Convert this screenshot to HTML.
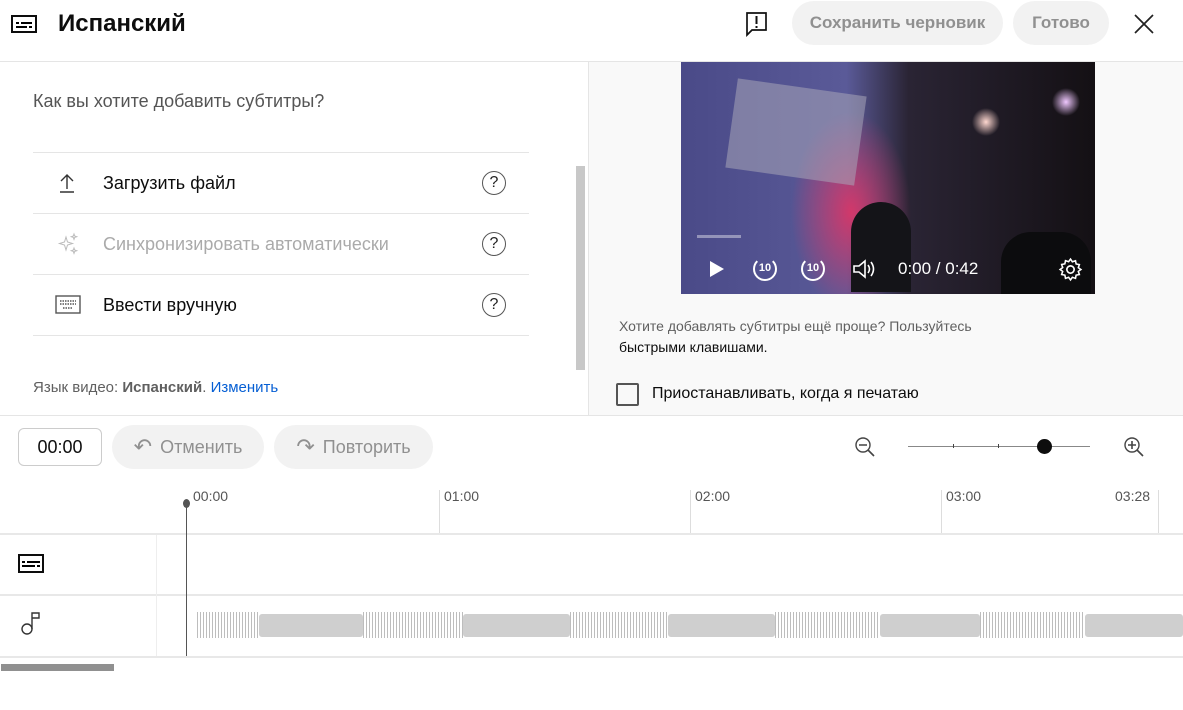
<!DOCTYPE html>
<html><head><meta charset="utf-8"><style>
*{box-sizing:border-box;margin:0;padding:0}
body{width:1183px;height:710px;overflow:hidden;background:#fff;font-family:"Liberation Sans",Roboto,"Noto Sans CJK SC",sans-serif;position:relative;color:#0d0d0d}
.a{position:absolute}
.pill{position:absolute;background:#f2f2f2;border-radius:22px;color:#909090;font-size:17px;display:flex;align-items:center;justify-content:center;font-weight:bold}
.row{position:absolute;left:33px;width:496px;height:61px;border-top:1px solid #e5e5e5;display:flex;align-items:center;font-size:18px}
.row .t{position:absolute;left:70px}
.q{position:absolute;left:449px;width:24px;height:24px;border:1.5px solid #555;border-radius:50%;font-size:16px;text-align:center;line-height:21px;color:#222}
.tick{position:absolute;top:490px;height:43px;border-left:1px solid #ddd}
.tl{position:absolute;top:488px;font-size:14px;color:#555}
.str{position:absolute;top:612px;height:26px;background:repeating-linear-gradient(90deg,#bdbdbd 0 1px,transparent 1px 3px)}
.sol{position:absolute;top:614px;height:23px;background:#cfcfcf;border-radius:3px}
</style></head><body>
<svg class="a" style="left:11px;top:14px" width="26" height="20" viewBox="0 0 26 20"><rect x="1" y="2" width="24" height="16" fill="none" stroke="#0d0d0d" stroke-width="2"/><rect x="5" y="8" width="3" height="2" fill="#000"/><rect x="10" y="8" width="11" height="2" fill="#000"/><rect x="5" y="12" width="11" height="2" fill="#000"/><rect x="18" y="12" width="3" height="2" fill="#000"/></svg>
<div class="a" style="left:58px;top:10px;font-size:24px;font-weight:bold">Испанский</div>
<svg class="a" style="left:745px;top:11px" width="24" height="26" viewBox="0 0 24 26"><path d="M2 2h19v17H7l-5 5z" fill="none" stroke="#111" stroke-width="1.7"/><rect x="10.5" y="5" width="2" height="8" fill="#111"/><rect x="10.5" y="15" width="2" height="2" fill="#111"/></svg>
<div class="pill" style="left:792px;top:1px;width:211px;height:44px">Сохранить черновик</div>
<div class="pill" style="left:1013px;top:1px;width:96px;height:44px">Готово</div>
<svg class="a" style="left:1133px;top:13px" width="22" height="22"><path d="M2 2L20 20M20 2L2 20" stroke="#222" stroke-width="1.7"/></svg>
<div class="a" style="left:0;top:61px;width:1183px;border-top:1px solid #e5e5e5"></div>
<div class="a" style="left:33px;top:91px;font-size:18px;color:#555">Как вы хотите добавить субтитры?</div>
<div class="row" style="top:152px"><svg class="a" style="left:25px" width="18" height="22"><path d="M9 3v14M3 9l6-6 6 6M2 20h14" stroke="#333" stroke-width="1.4" fill="none"/></svg><span class="t">Загрузить файл</span><div class="q">?</div></div>
<div class="row" style="top:213px;color:#aaa"><svg class="a" style="left:24px" width="24" height="24"><path d="M9 5l1.5 5 5 1.5-5 1.5L9 18l-1.5-5-5-1.5 5-1.5z M17 2l.7 2 2 .7-2 .7-.7 2-.7-2-2-.7 2-.7z M17 16l.7 2 2 .7-2 .7-.7 2-.7-2-2-.7 2-.7z" fill="none" stroke="#bbb" stroke-width="1"/></svg><span class="t">Синхронизировать автоматически</span><div class="q">?</div></div>
<div class="row" style="top:274px"><svg class="a" style="left:22px" width="26" height="20"><rect x="1" y="1" width="24" height="17" fill="none" stroke="#555" stroke-width="1.4"/><path d="M5 6h16M5 9h16M8 13h10" stroke="#555" stroke-width="1.4" stroke-dasharray="1.5 1"/></svg><span class="t">Ввести вручную</span><div class="q">?</div></div>
<div class="a" style="left:33px;top:335px;width:496px;border-top:1px solid #e5e5e5"></div>
<div class="a" style="left:33px;top:379px;font-size:15px;color:#606060">Язык видео: <b>Испанский</b>. <span style="color:#065fd4">Изменить</span></div>
<div class="a" style="left:576px;top:166px;width:9px;height:204px;background:#c8c8c8"></div>
<div class="a" style="left:588px;top:62px;width:1px;height:353px;background:#e5e5e5"></div>
<div class="a" style="left:589px;top:62px;width:594px;height:353px;background:#f9f9f9"></div>
<div class="a" style="left:681px;top:62px;width:414px;height:232px;overflow:hidden;background:radial-gradient(ellipse 60px 100px at 170px 150px,#d2386a,transparent),radial-gradient(circle 14px at 305px 60px,#ffd8d0,transparent),radial-gradient(circle 14px at 385px 40px,#f0c8ff,transparent),linear-gradient(90deg,#4a4a88 0,#5a5a98 40%,#2a2434 55%,#141014 100%)">
<div class="a" style="left:50px;top:25px;width:130px;height:90px;background:#a8a6b8;opacity:.55;transform:rotate(8deg)"></div>
<div class="a" style="left:170px;top:140px;width:60px;height:90px;background:#141418;border-radius:30px 30px 0 0"></div>
<div class="a" style="left:320px;top:170px;width:90px;height:70px;background:#0c0c0e;border-radius:30px 30px 0 0"></div>
<div class="a" style="left:16px;top:173px;width:44px;height:3px;background:rgba(255,255,255,.4)"></div>
<svg class="a" style="left:26px;top:197px" width="20" height="20"><path d="M3 2L17 10 3 18z" fill="#fff"/></svg>
<div class="a" style="left:72px;top:195px;width:24px;height:24px;border:2.5px solid #fff;border-radius:50%;color:#fff;font-size:11px;font-weight:bold;text-align:center;line-height:19px;border-top-color:transparent">10</div>
<div class="a" style="left:120px;top:195px;width:24px;height:24px;border:2.5px solid #fff;border-radius:50%;color:#fff;font-size:11px;font-weight:bold;text-align:center;line-height:19px;border-top-color:transparent">10</div>
<svg class="a" style="left:171px;top:196px" width="24" height="22"><path d="M2 8h5l6-5v16l-6-5H2z" fill="none" stroke="#fff" stroke-width="1.6"/><path d="M16 7q3 4 0 8M19 4q5 7 0 14" fill="none" stroke="#fff" stroke-width="1.6"/></svg>
<div class="a" style="left:217px;top:197px;color:#fff;font-size:17px">0:00 / 0:42</div>
<svg class="a" style="left:377px;top:195px" width="25" height="25" viewBox="0 0 24 24"><circle cx="12" cy="12" r="3.5" fill="none" stroke="#fff" stroke-width="1.6"/><path d="M12 2l1.8 2.6 3-1 .6 3.1 3.1.6-1 3L22 12l-2.5 1.8 1 3-3.1.6-.6 3.1-3-1L12 22l-1.8-2.5-3 1-.6-3.1-3.1-.6 1-3L2 12l2.5-1.8-1-3 3.1-.6.6-3.1 3 1z" fill="none" stroke="#fff" stroke-width="1.5"/></svg>
</div>
<div class="a" style="left:619px;top:316px;font-size:14px;color:#606060;line-height:21px">Хотите добавлять субтитры ещё проще? Пользуйтесь<br><span style="color:#0d0d0d">быстрыми клавишами.</span></div>
<div class="a" style="left:616px;top:383px;width:23px;height:23px;border:2px solid #555;border-radius:2px"></div>
<div class="a" style="left:652px;top:385px;font-size:16px">Приостанавливать, когда я печатаю</div>
<div class="a" style="left:0;top:415px;width:1183px;border-top:1px solid #e5e5e5"></div>
<div class="a" style="left:18px;top:428px;width:84px;height:38px;border:1px solid #ccc;border-radius:6px;font-size:18px;text-align:center;line-height:36px">00:00</div>
<div class="pill" style="left:112px;top:425px;width:152px;height:44px;font-weight:normal;font-size:18px;color:#909090"><span style="font-size:22px;margin-right:8px">↶</span>Отменить</div>
<div class="pill" style="left:274px;top:425px;width:159px;height:44px;font-weight:normal;font-size:18px;color:#909090"><span style="font-size:22px;margin-right:8px">↷</span>Повторить</div>
<svg class="a" style="left:853px;top:435px" width="24" height="24"><circle cx="10" cy="10" r="7" fill="none" stroke="#444" stroke-width="1.4"/><path d="M6 10h8M15 15l6 6" stroke="#444" stroke-width="1.6"/></svg>
<div class="a" style="left:908px;top:446px;width:182px;height:1px;background:#888"></div>
<div class="a" style="left:953px;top:444px;width:1px;height:4px;background:#444"></div>
<div class="a" style="left:998px;top:444px;width:1px;height:4px;background:#444"></div>
<div class="a" style="left:1037px;top:439px;width:15px;height:15px;border-radius:50%;background:#0d0d0d"></div>
<svg class="a" style="left:1122px;top:435px" width="24" height="24"><circle cx="10" cy="10" r="7" fill="none" stroke="#444" stroke-width="1.4"/><path d="M6 10h8M10 6v8M15 15l6 6" stroke="#444" stroke-width="1.6"/></svg>
<div class="tick" style="left:439px"></div><div class="tick" style="left:690px"></div><div class="tick" style="left:941px"></div><div class="tick" style="left:1158px"></div>
<div class="tl" style="left:193px">00:00</div><div class="tl" style="left:444px">01:00</div><div class="tl" style="left:695px">02:00</div><div class="tl" style="left:946px">03:00</div><div class="tl" style="left:1115px">03:28</div>
<div class="a" style="left:0;top:533px;width:1183px;border-top:2px solid #e8e8e8"></div>
<div class="a" style="left:0;top:594px;width:1183px;border-top:2px solid #e8e8e8"></div>
<div class="a" style="left:0;top:656px;width:1183px;border-top:2px solid #e8e8e8"></div>
<div class="a" style="left:156px;top:535px;width:1px;height:121px;background:#eee"></div>
<svg class="a" style="left:18px;top:554px" width="26" height="19"><rect x="1" y="1" width="24" height="17" fill="none" stroke="#0d0d0d" stroke-width="2"/><rect x="4" y="7" width="3" height="2"/><rect x="9" y="7" width="13" height="2"/><rect x="4" y="11" width="13" height="2"/><rect x="19" y="11" width="3" height="2"/></svg>
<svg class="a" style="left:20px;top:610px" width="22" height="26"><circle cx="7" cy="19" r="5" fill="none" stroke="#333" stroke-width="1.4"/><path d="M12 19V3h7v5h-7" fill="none" stroke="#333" stroke-width="1.4"/></svg>
<div class="str" style="left:197px;width:62px"></div>
<div class="sol" style="left:259px;width:104px"></div>
<div class="str" style="left:363px;width:100px"></div>
<div class="sol" style="left:463px;width:107px"></div>
<div class="str" style="left:570px;width:98px"></div>
<div class="sol" style="left:668px;width:107px"></div>
<div class="str" style="left:775px;width:105px"></div>
<div class="sol" style="left:880px;width:100px"></div>
<div class="str" style="left:980px;width:105px"></div>
<div class="sol" style="left:1085px;width:98px"></div>
<div class="a" style="left:186px;top:503px;width:1px;height:153px;background:#555"></div>
<div class="a" style="left:183px;top:499px;width:7px;height:9px;border-radius:50%;background:#555"></div>
<div class="a" style="left:1px;top:664px;width:113px;height:7px;background:#909090"></div>
</body></html>
